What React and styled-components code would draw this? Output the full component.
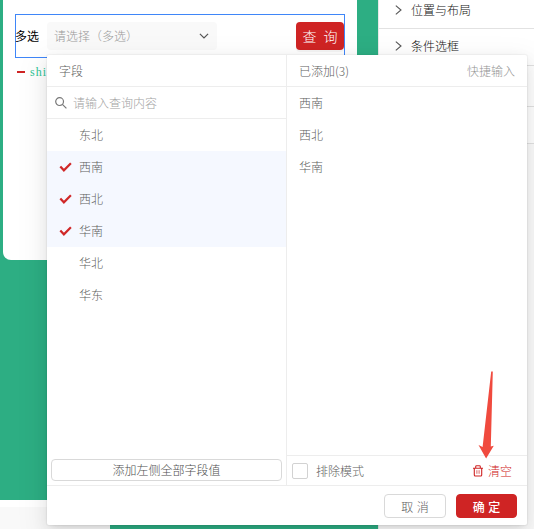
import React from 'react';
import styled, { createGlobalStyle } from 'styled-components';

const GlobalStyle = createGlobalStyle`
  * { box-sizing: border-box; }
  body {
    margin: 0;
    overflow: hidden;
    font-family: "Noto Sans CJK SC", "Liberation Sans", sans-serif;
    font-size: 12px;
    font-weight: 300;
    line-height: 18px;
    color: #606060;
  }
  button { font-family: inherit; padding: 0; }
`;

const Page = styled.div`
  position: relative;
  display: flex;
  width: 534px;
  height: 529px;
  overflow: hidden;
  background: #fff;
`;

const Board = styled.main`
  display: flex;
  flex-direction: column;
  width: 378px;
  background: #2dae83;
`;

const Card = styled.section`
  width: 354px;
  height: 260px;
  margin-left: 3px;
  padding: 14px 12px 0;
  background: #fff;
  border-radius: 0 0 8px 8px;
`;

const QueryBar = styled.div`
  display: flex;
  align-items: center;
  width: 330px;
  height: 44px;
  border: 1px solid #3f86f8;
`;

const Label = styled.span`
  width: 31px;
  margin-left: -1px;
  margin-right: 1px;
  color: #000;
  font-weight: 400;
  line-height: 28px;
  white-space: nowrap;
`;

const SelectBox = styled.div`
  display: flex;
  align-items: center;
  justify-content: space-between;
  width: 170px;
  height: 28px;
  padding: 0 8px 0 7px;
  border-radius: 4px;
  background: #f9f9f9;
  color: #999;
`;

const QueryButton = styled.button`
  width: 48px;
  height: 28px;
  margin-left: auto;
  border: 0;
  border-radius: 4px;
  background: #cf2424;
  color: #fff;
  font-size: 14px;
  font-weight: 300;
  line-height: 26px;
  word-spacing: 4px;
  box-shadow: 0 2px 0 rgba(0, 0, 0, 0.04);
`;

const Legend = styled.div`
  display: flex;
  align-items: center;
  gap: 5px;
  height: 28px;
  padding-left: 2px;
  color: #2ec495;
  font-family: "Liberation Serif", serif;
  font-size: 12px;
  font-weight: 400;
  letter-spacing: 1px;
`;

const Dash = styled.i`
  width: 8px;
  height: 2px;
  background: #cf2424;
`;

const Sheet = styled.div`
  width: 110px;
  height: 29px;
  margin-top: auto;
  border-top: 7px solid #fff;
  background: #f9f9f9;
`;

const Side = styled.aside`
  flex: 1;
  border-left: 1px solid #e8e8e8;
  background: #fbfbfb;
`;

const SideRow = styled.div`
  display: flex;
  align-items: center;
  gap: 9px;
  height: ${({ $height }) => $height}px;
  padding-left: 16px;
  padding-bottom: ${({ $bottom }) => $bottom || 0}px;
  border-bottom: 1px solid #e2e2e2;
  background: #fff;
  color: #111;
`;

const Popup = styled.div`
  position: absolute;
  left: 47px;
  top: 55px;
  display: flex;
  flex-direction: column;
  width: 480px;
  height: 470px;
  border-radius: 2px;
  background: #fff;
  box-shadow: 0 0 1px 1px rgba(0, 0, 0, 0.04), 0 3px 6px -4px rgba(0, 0, 0, 0.12),
    0 6px 16px rgba(0, 0, 0, 0.08), 0 9px 28px 8px rgba(0, 0, 0, 0.05);
`;

const Columns = styled.div`
  display: flex;
  height: 431px;
  border-bottom: 1px solid #ededed;
`;

const Column = styled.div`
  display: flex;
  flex-direction: column;
  width: 240px;
  ${({ $divided }) => $divided && 'border-right: 1px solid #ededed;'}
`;

const ColumnHead = styled.div`
  display: flex;
  align-items: center;
  justify-content: space-between;
  height: 32px;
  padding: 0 12px;
  border-bottom: 1px solid #ededed;
`;

const Muted = styled.span`
  color: #959595;
`;

const Search = styled.div`
  display: flex;
  align-items: center;
  gap: 6px;
  height: 32px;
  padding-left: 8px;
  border-bottom: 1px solid #ededed;
  color: #a3a3a3;
`;

const Option = styled.div`
  display: flex;
  align-items: center;
  height: 32px;
  padding-left: 12px;
  background: ${({ $selected }) => ($selected ? '#f5f8ff' : 'transparent')};
`;

const CheckSlot = styled.span`
  display: flex;
  width: 20px;
`;

const AddAll = styled.button`
  height: 22px;
  margin: auto 4px 4px;
  border: 1px solid #d9d9d9;
  border-radius: 4px;
  background: #fff;
  color: #505050;
  font-size: 12px;
  font-weight: 300;
  line-height: 20px;
`;

const Tools = styled.div`
  display: flex;
  align-items: center;
  height: 30px;
  margin-top: auto;
  padding: 0 15px 0 5px;
  border-top: 1px solid #ededed;
`;

const Checkbox = styled.span`
  width: 16px;
  height: 16px;
  margin-right: 8px;
  border: 1px solid #d2d2d2;
  border-radius: 2px;
`;

const Clear = styled.span`
  display: flex;
  align-items: center;
  gap: 5px;
  margin-left: auto;
  color: #cf2424;
`;

const Footer = styled.footer`
  display: flex;
  justify-content: flex-end;
  gap: 10px;
  padding: 8px 10px 0 0;
`;

const Action = styled.button`
  width: ${({ $primary }) => ($primary ? 61 : 62)}px;
  height: 24px;
  border: 1px solid ${({ $primary }) => ($primary ? '#cf2424' : '#d9d9d9')};
  border-radius: 4px;
  background: ${({ $primary }) => ($primary ? '#cf2424' : '#fff')};
  color: ${({ $primary }) => ($primary ? '#fff' : '#606060')};
  font-size: 12px;
  line-height: 21px;
  word-spacing: 1px;
  font-weight: ${({ $primary }) => ($primary ? 500 : 300)};
`;

const Pointer = styled.svg`
  position: absolute;
  left: 478px;
  top: 370px;
`;

const fields = ['东北', '西南', '西北', '华南', '华北', '华东'];
const added = ['西南', '西北', '华南'];

const Chevron = () => (
  <svg width="7" height="10" viewBox="0 0 7 10" fill="none" stroke="#555" strokeWidth="1.1">
    <path d="M.8.6 6 5 .8 9.4" />
  </svg>
);

const DownIcon = () => (
  <svg width="10" height="6" viewBox="0 0 10 6" fill="none" stroke="#555" strokeWidth="1.2">
    <path d="M.9.8 5 4.9 9.1.8" />
  </svg>
);

const SearchIcon = () => (
  <svg width="12" height="12" viewBox="0 0 12 12" fill="none" stroke="#777" strokeWidth="1.2">
    <circle cx="4.6" cy="4.6" r="3.9" />
    <path d="m7.4 7.4 4 4" />
  </svg>
);

const CheckIcon = () => (
  <svg width="14" height="10" viewBox="0 0 14 10" fill="none" stroke="#d02828" strokeWidth="2.2">
    <path d="m1.3 4.4 3.6 3.9 7-7" />
  </svg>
);

const TrashIcon = () => (
  <svg width="10" height="12" viewBox="0 0 10 12" fill="none" stroke="#cf2424" strokeWidth="1.1">
    <path d="M0 3.2h10M2.7 3.2V1.6q0-.9.9-.9h2.8q.9 0 .9.9v1.6M1.3 3.2V10q0 1 1 1h5.4q1 0 1-1V3.2" />
    <path d="M3.9 5.2v3.6M6.1 5.2v3.6" strokeWidth=".7" />
  </svg>
);

export default function App() {
  return (
    <Page>
      <GlobalStyle />
      <Board>
        <Card>
          <QueryBar>
            <Label>多选</Label>
            <SelectBox>
              请选择（多选）
              <DownIcon />
            </SelectBox>
            <QueryButton>查 询</QueryButton>
          </QueryBar>
          <Legend>
            <Dash />
            shi
          </Legend>
        </Card>
        <Sheet />
      </Board>
      <Side>
        <SideRow $height={29} $bottom={9}><Chevron />位置与布局</SideRow>
        <SideRow $height={37} $bottom={2}><Chevron />条件选框</SideRow>
        <SideRow $height={41} />
        <SideRow $height={37} />
      </Side>
      <Popup>
        <Columns>
          <Column $divided>
            <ColumnHead>字段</ColumnHead>
            <Search>
              <SearchIcon />
              请输入查询内容
            </Search>
            {fields.map((name) => (
              <Option key={name} $selected={added.includes(name)}>
                <CheckSlot>{added.includes(name) && <CheckIcon />}</CheckSlot>
                {name}
              </Option>
            ))}
            <AddAll>添加左侧全部字段值</AddAll>
          </Column>
          <Column>
            <ColumnHead>
              <span>已添加(3)</span>
              <Muted>快捷输入</Muted>
            </ColumnHead>
            {added.map((name) => (
              <Option key={name}>{name}</Option>
            ))}
            <Tools>
              <Checkbox />
              排除模式
              <Clear>
                <TrashIcon />
                清空
              </Clear>
            </Tools>
          </Column>
        </Columns>
        <Footer>
          <Action>取 消</Action>
          <Action $primary>确 定</Action>
        </Footer>
      </Popup>
      <Pointer width="16" height="90" viewBox="0 0 16 90">
        <path d="M13.2 1.5h1.6L12.8 76.4l3-.6L8.1 88.5.5 75l4.1 2Z" fill="#f04a3e" />
      </Pointer>
    </Page>
  );
}
